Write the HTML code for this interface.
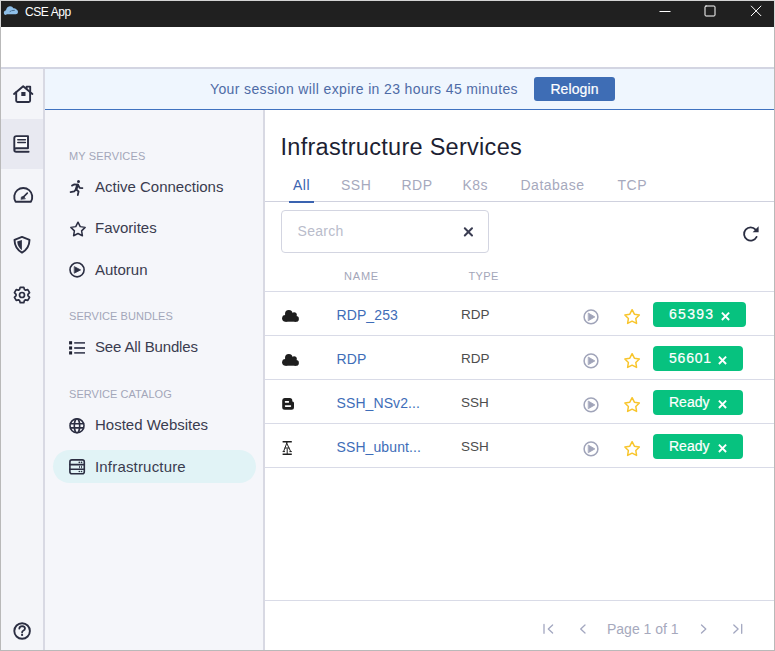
<!DOCTYPE html>
<html><head><meta charset="utf-8">
<style>
*{box-sizing:border-box;margin:0;padding:0}
html,body{width:775px;height:651px;overflow:hidden;background:#fff;font-family:"Liberation Sans",sans-serif}
.abs{position:absolute}
#win{position:absolute;left:0;top:0;width:775px;height:651px;border:1px solid #b9b9b9;overflow:hidden;background:#fff}
#tb1{position:absolute;left:0;top:0;width:775px;height:1px;background:#d4d4d4}
#tb2{position:absolute;left:0;top:0;width:1px;height:27px;background:#d4d4d4}
#tb3{position:absolute;left:774px;top:0;width:1px;height:27px;background:#d4d4d4}
#title{position:absolute;left:0;top:0;width:773px;height:26px;background:#202020;color:#fff}
#title .t{position:absolute;left:24px;top:4px;font-size:12px;letter-spacing:-0.42px}
#hdrline{position:absolute;left:0;top:66px;width:773px;height:2px;background:#d3d5e2}
#rail{position:absolute;left:0;top:68px;width:44px;height:582px;background:#f4f5f9;border-right:2px solid #d8d9e3}
#rail .sel{position:absolute;left:0;top:50px;width:42px;height:50px;background:#e8e9f1}
#banner{position:absolute;left:44px;top:68px;width:729px;height:41px;background:#eff6fe;border-bottom:1px solid #3f72c0}
#banner .msg{position:absolute;left:165px;top:12px;font-size:14px;color:#4e6ba6;letter-spacing:0.37px;white-space:nowrap}
#banner .btn{position:absolute;left:489px;top:8px;width:81px;height:24px;background:#3e6db5;border-radius:3px;color:#fff;font-size:14px;text-align:center;line-height:24px;letter-spacing:0.1px;-webkit-text-stroke:0.2px #fff}
#side{position:absolute;left:44px;top:109px;width:220px;height:541px;background:#f5f6fa;border-right:2px solid #d8d9e3}
.lbl{position:absolute;left:24px;font-size:11px;color:#a3a6b9;letter-spacing:0.15px;white-space:nowrap}
.item{position:absolute;left:50px;font-size:15px;color:#3a3c4f;white-space:nowrap}
.ic{position:absolute}
#pill{position:absolute;left:8px;top:340px;width:203px;height:33px;border-radius:16.5px;background:#e1f3f6}
#main{position:absolute;left:264px;top:109px;width:509px;height:541px;background:#fff}
h1{position:absolute;left:15.5px;top:23.5px;font-size:23.5px;font-weight:400;color:#1d1f33;letter-spacing:0.28px;white-space:nowrap}
.tab{position:absolute;top:67px;font-size:14px;color:#a6a9bd;letter-spacing:0.5px}
#tabline{position:absolute;left:0;top:91px;width:509px;height:1px;background:#cfd1de}
#tabul{position:absolute;left:24px;top:91px;width:25px;height:2px;background:#3a63b0}
#search{position:absolute;left:16px;top:100px;width:208px;height:43px;border:1px solid #d3d5e1;border-radius:4px}
#search .ph{position:absolute;left:15.5px;top:12px;font-size:14px;color:#b9bccb;letter-spacing:0.3px}
.th{position:absolute;top:160px;font-size:11px;color:#a3a6b9;letter-spacing:0.8px}
.hl{position:absolute;left:0;width:509px;height:1px;background:#d9dbe7}
.nm{position:absolute;left:71.5px;font-size:14px;color:#3e6db8;letter-spacing:0.1px;white-space:nowrap}
.ty{position:absolute;left:196px;font-size:13.5px;color:#4d4d4d;letter-spacing:0px}
.badge{position:absolute;left:388px;height:25px;background:#07c27f;border-radius:4px;color:#fff;font-size:14px;font-weight:400;-webkit-text-stroke:0.2px #fff;letter-spacing:0.8px;white-space:nowrap}
.badge span{position:absolute;left:16px;top:4px}
#foot{position:absolute;left:0;top:490px;width:509px;height:1px;background:#d9dbe7}
.pg{position:absolute;top:511px;font-size:14px;color:#a6a9bd}

</style></head><body>
<div id="win">
  <div id="title">
    <div class="t">CSE App</div>
  </div>
  <div id="hdrline"></div>
  <div id="rail">
    <div class="sel"></div>
  </div>
  <div id="banner">
    <div class="msg">Your session will expire in 23 hours 45 minutes</div>
    <div class="btn">Relogin</div>
  </div>
  <div id="side">
    <div class="lbl" style="top:40px">MY SERVICES</div>
    <div class="item" style="top:68px">Active Connections</div>
    <div class="item" style="top:109px">Favorites</div>
    <div class="item" style="top:151px">Autorun</div>
    <div class="lbl" style="top:200px;letter-spacing:0.05px">SERVICE BUNDLES</div>
    <div class="item" style="top:228px;letter-spacing:-0.15px">See All Bundles</div>
    <div class="lbl" style="top:278px;letter-spacing:0.05px">SERVICE CATALOG</div>
    <div id="pill"></div>
    <div class="item" style="top:306px">Hosted Websites</div>
    <div class="item" style="top:348px;letter-spacing:0.18px">Infrastructure</div>
  </div>
  <div id="main">
    <h1>Infrastructure Services</h1>
    <div class="tab" style="left:28px;color:#3a63b0">All</div>
    <div class="tab" style="left:76px">SSH</div>
    <div class="tab" style="left:136.5px">RDP</div>
    <div class="tab" style="left:197.5px">K8s</div>
    <div class="tab" style="left:255.5px">Database</div>
    <div class="tab" style="left:352.5px">TCP</div>
    <div id="tabline"></div>
    <div id="tabul"></div>
    <div id="search"><div class="ph">Search</div></div>
    <div class="th" style="left:79px">NAME</div>
    <div class="th" style="left:203.5px;letter-spacing:0.35px">TYPE</div>
    <div class="hl" style="top:181px"></div>
    <div class="hl" style="top:225px"></div>
    <div class="hl" style="top:269px"></div>
    <div class="hl" style="top:313px"></div>
    <div class="hl" style="top:357px"></div>
    <div class="nm" style="top:197px">RDP_253</div><div class="ty" style="top:197px">RDP</div>
    <div class="nm" style="top:241px">RDP</div><div class="ty" style="top:241px">RDP</div>
    <div class="nm" style="top:285px">SSH_NSv2...</div><div class="ty" style="top:285px">SSH</div>
    <div class="nm" style="top:329px">SSH_ubunt...</div><div class="ty" style="top:329px">SSH</div>
    <div class="badge" style="top:192px;width:93px"><span style="letter-spacing:1.3px">65393</span></div>
    <div class="badge" style="top:236px;width:90px"><span>56601</span></div>
    <div class="badge" style="top:280px;width:90px"><span style="letter-spacing:0">Ready</span></div>
    <div class="badge" style="top:324px;width:90px"><span style="letter-spacing:0">Ready</span></div>
    <div id="foot"></div>
    <div class="pg" style="left:342px">Page 1 of 1</div>
  </div>
</div>
<div id="tb1"></div><div id="tb2"></div><div id="tb3"></div>

<svg id="ov" width="775" height="651" viewBox="0 0 775 651" style="position:absolute;left:0;top:0" fill="none" stroke-linecap="round" stroke-linejoin="round">
<g stroke="#2b2e42" stroke-width="1.9">
 <path d="M14 94 L23.2 86.2 L32.4 94"/>
 <path d="M16.2 92.3 V100.8 Q16.2 102 17.4 102 H28.9 Q30.1 102 30.1 100.8 V92.3"/>
 <path d="M26.6 88.6 V86.6 H30.2 V91.4"/>
</g>
<rect x="21.3" y="92" width="4.2" height="4" fill="#2b2e42"/>
<g stroke="#2b2e42" stroke-width="1.9">
 <path d="M14.3 150 V138.2 Q14.3 136.1 16.4 136.1 H28 V148.2 H16.2 Q14.3 148.2 14.3 150 Q14.3 151.7 16.2 151.7 H28.6 V148.2" fill="#fbfbfd" stroke="none"/>
 <path d="M14.3 150.3 V138.2 Q14.3 136.1 16.4 136.1 H28 V148.2 H16.2 Q14.3 148.2 14.3 150 Q14.3 151.7 16.2 151.7 H28.6"/>
 <path d="M17.8 139.7 H25.4 M17.8 142.6 H25.4" stroke-width="1.5"/>
</g>
<g stroke="#2b2e42" stroke-width="1.9">
 <path d="M15.6 201.7 A9 9 0 1 1 30.9 201.7 Z"/>
 <path d="M22.8 197.6 L27.3 193.1" stroke-width="1.6"/>
</g>
<path d="M21 199.3 L21.3 196.9 L23.6 196.3 L25.3 198.6 Z" fill="#2b2e42" stroke="#2b2e42" stroke-width="0.5"/>
<path d="M22 236.9 L14.5 239.9 C14.6 245.5 17 249.6 22 252.6 C27 249.6 29.4 245.5 29.5 239.9 Z" stroke="#2b2e42" stroke-width="1.9"/>
<path d="M17.2 241.6 L21.9 240.1 V250.2 C19.2 248.3 17.4 245.5 17.2 241.6 Z" fill="#2b2e42"/>
<path d="M24.44 289.52 L23.78 287.30 L20.22 287.30 L19.56 289.52 L18.47 290.15 L16.22 289.61 L14.45 292.69 L16.03 294.37 L16.03 295.63 L14.45 297.31 L16.22 300.39 L18.47 299.85 L19.56 300.48 L20.22 302.70 L23.78 302.70 L24.44 300.48 L25.53 299.85 L27.78 300.39 L29.55 297.31 L27.97 295.63 L27.97 294.37 L29.55 292.69 L27.78 289.61 L25.53 290.15 Z" stroke="#2b2e42" stroke-width="1.7"/>
<circle cx="22" cy="295" r="2.5" stroke="#2b2e42" stroke-width="1.7"/>
<circle cx="22.1" cy="631" r="7.8" stroke="#2b2e42" stroke-width="1.9"/>
<path d="M19.3 628.6 Q19.6 626.2 22.2 626.2 Q25 626.3 25 628.6 Q25 630 23.2 630.8 Q22.1 631.3 22.1 632.4" stroke="#2b2e42" stroke-width="1.8"/>
<circle cx="22.1" cy="634.9" r="1.1" fill="#2b2e42"/>
<circle cx="78.5" cy="181.5" r="1.5" fill="#2b2e42"/>
<path d="M72 185.6 L74.4 184.3 L77.9 184.7 M76.1 189.4 L74.2 191.3 L70.6 192.1 M77.9 184.7 L79.6 187.8 L82.4 188.2 M76.1 189.4 L78.6 191.5 L77.8 195" stroke="#2b2e42" stroke-width="1.8"/>
<path d="M77.6 185 L76.1 189.4" stroke="#2b2e42" stroke-width="2.6"/>
<path d="M78.00 222.20 L80.23 226.63 L85.13 227.38 L81.61 230.87 L82.41 235.77 L78.00 233.50 L73.59 235.77 L74.39 230.87 L70.87 227.38 L75.77 226.63 Z" stroke="#2b2e42" stroke-width="1.5"/>
<circle cx="77.05" cy="269.8" r="7.05" stroke="#2b2e42" stroke-width="1.6"/>
<path d="M74.6 266.8 L80.6 269.9 L74.6 273 Z" fill="#2b2e42" stroke="#2b2e42" stroke-width="0.8"/>
<g fill="#1e2030"><rect x="69.1" y="341.2" width="3" height="3.2"/><rect x="69.1" y="346.4" width="3" height="3.2"/><rect x="69.1" y="351.3" width="3" height="3.2"/></g>
<path d="M74.2 342.9 H85 M74.2 348 H85 M74.2 352.9 H85" stroke="#4a4d60" stroke-width="1.8" stroke-linecap="butt"/>
<g stroke="#2b2e42" stroke-width="1.6"><circle cx="77" cy="425.8" r="7"/><ellipse cx="77" cy="425.8" rx="2.7" ry="7"/><path d="M70.5 423.7 H83.5 M70.5 427.9 H83.5"/></g>
<g stroke="#2b2e42" stroke-width="1.6"><rect x="69.9" y="459.9" width="14.4" height="13.9" rx="2"/><path d="M69.9 464.6 H84.3 M69.9 469.2 H84.3"/></g>
<g fill="#2b2e42"><circle cx="79.3" cy="462.4" r="0.8"/><circle cx="81.5" cy="462.4" r="0.8"/><circle cx="79.3" cy="471.5" r="0.8"/><circle cx="81.5" cy="471.5" r="0.8"/><rect x="79" y="465.8" width="0.8" height="2.4"/><rect x="81.2" y="465.8" width="0.8" height="2.4"/></g>
<path d="M464.8 228.3 L472 235.5 M472 228.3 L464.8 235.5" stroke="#3a3d52" stroke-width="2"/>
<path d="M756.6 236.9 A6.6 6.6 0 1 1 755.6 229.6" stroke="#2b2e42" stroke-width="1.8"/>
<path d="M758.6 226.2 L758.6 232.2 L752.6 232.2 Z" fill="#2b2e42"/>
<circle cx="591" cy="316.9" r="6.9" stroke="#a0a4b9" stroke-width="1.5"/>
<path d="M588.6 313.3 L594.8 316.9 L588.6 320.5 Z" fill="#a0a4b9" stroke="#a0a4b9" stroke-width="0.9"/>
<path d="M632.10 309.70 L634.39 314.14 L639.33 314.95 L635.81 318.51 L636.57 323.45 L632.10 321.20 L627.63 323.45 L628.39 318.51 L624.87 314.95 L629.81 314.14 Z" stroke="#f8c52c" stroke-width="1.5"/>
<path d="M721.9 312.6 L729.1 320.0 M729.1 312.6 L721.9 320.0" stroke="#fff" stroke-width="1.9" stroke-linecap="butt"/>
<circle cx="591" cy="360.9" r="6.9" stroke="#a0a4b9" stroke-width="1.5"/>
<path d="M588.6 357.3 L594.8 360.9 L588.6 364.5 Z" fill="#a0a4b9" stroke="#a0a4b9" stroke-width="0.9"/>
<path d="M632.10 353.70 L634.39 358.14 L639.33 358.95 L635.81 362.51 L636.57 367.45 L632.10 365.20 L627.63 367.45 L628.39 362.51 L624.87 358.95 L629.81 358.14 Z" stroke="#f8c52c" stroke-width="1.5"/>
<path d="M718.9 356.6 L726.1 364.0 M726.1 356.6 L718.9 364.0" stroke="#fff" stroke-width="1.9" stroke-linecap="butt"/>
<circle cx="591" cy="404.9" r="6.9" stroke="#a0a4b9" stroke-width="1.5"/>
<path d="M588.6 401.3 L594.8 404.9 L588.6 408.5 Z" fill="#a0a4b9" stroke="#a0a4b9" stroke-width="0.9"/>
<path d="M632.10 397.70 L634.39 402.14 L639.33 402.95 L635.81 406.51 L636.57 411.45 L632.10 409.20 L627.63 411.45 L628.39 406.51 L624.87 402.95 L629.81 402.14 Z" stroke="#f8c52c" stroke-width="1.5"/>
<path d="M718.9 400.6 L726.1 408.0 M726.1 400.6 L718.9 408.0" stroke="#fff" stroke-width="1.9" stroke-linecap="butt"/>
<circle cx="591" cy="448.9" r="6.9" stroke="#a0a4b9" stroke-width="1.5"/>
<path d="M588.6 445.3 L594.8 448.9 L588.6 452.5 Z" fill="#a0a4b9" stroke="#a0a4b9" stroke-width="0.9"/>
<path d="M632.10 441.70 L634.39 446.14 L639.33 446.95 L635.81 450.51 L636.57 455.45 L632.10 453.20 L627.63 455.45 L628.39 450.51 L624.87 446.95 L629.81 446.14 Z" stroke="#f8c52c" stroke-width="1.5"/>
<path d="M718.9 444.6 L726.1 452.0 M726.1 444.6 L718.9 452.0" stroke="#fff" stroke-width="1.9" stroke-linecap="butt"/>
<g fill="#1e1e1e"><circle cx="285.5" cy="318.3" r="3.4"/><circle cx="288.8" cy="313.7" r="3.8"/><circle cx="294.2" cy="314.8" r="2.6"/><circle cx="296.1" cy="318.9" r="2.8"/><rect x="285.5" y="314" width="10.6" height="7.7"/></g>
<g fill="#1e1e1e"><circle cx="285.5" cy="362.3" r="3.4"/><circle cx="288.8" cy="357.7" r="3.8"/><circle cx="294.2" cy="358.8" r="2.6"/><circle cx="296.1" cy="362.9" r="2.8"/><rect x="285.5" y="358" width="10.6" height="7.7"/></g>
<path fill="#1e1e1e" fill-rule="evenodd" d="M284.6 397.9 H289.8 Q292.3 397.9 292.3 400.4 V401.6 H292.5 Q294 401.6 294 403.1 V407.2 Q294 409.7 291.5 409.7 H284.7 Q282.2 409.7 282.2 407.2 V400.4 Q282.2 397.9 284.6 397.9 Z M285.3 400.9 H288.6 Q289.1 400.9 289.1 401.8 Q289.1 402.7 288.6 402.7 H285.3 Q284.8 402.7 284.8 401.8 Q284.8 400.9 285.3 400.9 Z M285.4 405.3 H290.6 Q291.2 405.3 291.2 406.1 Q291.2 406.9 290.6 406.9 H285.4 Q284.8 406.9 284.8 406.1 Q284.8 405.3 285.4 405.3 Z"/>
<g stroke="#1e1e1e" stroke-linecap="butt"><path d="M282.6 441.7 H291.8 M282.6 454.2 H291.8" stroke-width="1.4"/><path d="M287.2 442 L283.6 451.5 M286.3 442.3 L290.7 451.5 M284.6 448 H289.4 M282.6 451.6 H285 M289.4 451.6 H291.8 M287.2 448.5 V454" stroke-width="1"/></g>
<path d="M544 624.5 V633.3 M552.6 625 L548.3 629 L552.6 633 M585 625 L580.7 629 L585 633 M701.5 625 L705.8 629 L701.5 633 M733.8 625 L738.1 629 L733.8 633 M741.7 624.5 V633.3" stroke="#a3a7c0" stroke-width="1.3"/>
<path d="M5.5 15 Q3.6 14.6 3.8 12.4 Q4 10.6 6 10.2 Q6.6 6.8 9.6 6.3 Q12.2 5.9 13.4 8.2 Q15.8 7.8 16.8 9.8 Q18.2 10.4 18 12.2 Q17.8 14.2 15.8 14.3 H7 Z" fill="#8ebfe9"/><path d="M10 11.6 L11.2 10.9 M12.2 10.6 L14.4 10.4" stroke="#3a5a7a" stroke-width="0.8"/>
<path d="M659.5 11.5 H670.5" stroke="#fff" stroke-width="1" stroke-linecap="butt"/><rect x="705" y="6" width="10" height="10" rx="1" stroke="#fff" stroke-width="1"/><path d="M751 5.8 L761.2 16 M761.2 5.8 L751 16" stroke="#fff" stroke-width="1" stroke-linecap="butt"/>
</svg>
</body></html>
